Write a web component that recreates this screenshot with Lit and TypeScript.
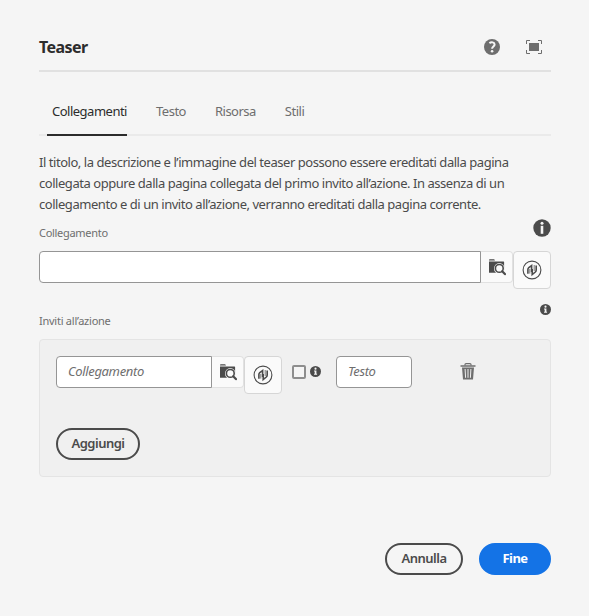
import { LitElement, html, css } from "lit";
import { customElement } from "lit/decorators.js";

const infoIcon = (cls: string) => html`<svg class=${cls} viewBox="0 0 18 18">
  <circle cx="9" cy="9" r="9" fill="#4b4b4b" />
  <circle cx="9" cy="4.400" r="1.750" fill="#f5f5f5" />
  <path d="M6.600 7.200h3.900v5.600h1.100v1.600H6.600v-1.600h1.100V8.800H6.600z" fill="#f5f5f5" />
</svg>`;

const bigInfoIcon = html`<svg class="big" viewBox="0 0 18 18">
  <circle cx="9" cy="9" r="8.700" fill="#4b4b4b" />
  <circle cx="9" cy="4.300" r="1.500" fill="#f5f5f5" />
  <path d="M7.700 6.800h2.600v8H7.700z" fill="#f5f5f5" />
</svg>`;

const folderIcon = html`<svg class="folder" viewBox="0 0 18 18">
  <path d="M1 2.500c0-.8.400-1.300 1-1.300h3.600c.6 0 1 .3 1.400 1.300z" fill="#4b4b4b" />
  <path d="M1 3.400h14.500c.400 0 .6.200.6.600V14.700H1z" fill="#4b4b4b" />
  <circle cx="11.300" cy="10.400" r="5.300" fill="#fafafa" />
  <path d="M11 10.500l7 2v4h-7z" fill="#fafafa" />
  <circle cx="11.300" cy="10.400" r="3.900" fill="#fafafa" stroke="#4b4b4b" stroke-width="1.600" />
  <path d="M14.200 13.300l2.700 2.800" stroke="#4b4b4b" stroke-width="2.200" stroke-linecap="round" />
</svg>`;

const linkIcon = html`<svg class="link" viewBox="0 0 20 20">
  <circle cx="10" cy="10" r="8.900" fill="none" stroke="#4b4b4b" stroke-width="1.100" />
  <path d="M5.900 13.800V9.600Q5.900 8.500 6.800 7.700L9.600 5.600V12" fill="none" stroke="#4b4b4b" stroke-width="1.600" />
  <path d="M7.800 9v4.600" stroke="#777" stroke-width="1" />
  <path d="M14.200 5.600v4.400Q14.200 11.200 13.300 12L10.200 14.600V9" fill="none" stroke="#4b4b4b" stroke-width="1.600" />
  <path d="M12.200 5v6" stroke="#777" stroke-width="1" />
</svg>`;

@customElement("app-root")
export class AppRoot extends LitElement {
  static styles = css`
    :host {
      display: block;
      box-sizing: border-box;
      height: 616px;
      padding: 24px 38px 0 39px;
      background: #f5f5f5;
      color: #4b4b4b;
      font: 13px/21px "Noto Sans", sans-serif;
      white-space: nowrap;
    }
    * { box-sizing: border-box; }
    svg { display: block; flex: none; }
    header {
      display: flex;
      align-items: center;
      height: 48px;
      border-bottom: 2px solid #e1e1e1;
    }
    h1 {
      flex: 1;
      margin: 0;
      font-size: 16px;
      font-weight: 700;
      letter-spacing: -0.55px;
      color: #2c2c2c;
    }
    .help { width: 16px; height: 16px; margin-right: 26px; }
    .full { width: 16px; height: 14px; margin-right: 9px; }
    nav {
      display: flex;
      height: 64px;
      padding: 15px 8px 0;
      border-bottom: 2px solid #eaeaea;
      color: #6e6e6e;
    }
    .tab {
      height: 49px;
      line-height: 48px;
      padding: 0 5px;
      margin-right: 19px;
      letter-spacing: -0.5px;
    }
    .tab.on {
      width: 80px;
      padding: 0 0 0 5px;
      margin-right: 24px;
      color: #2c2c2c;
      border-bottom: 2px solid #2c2c2c;
    }
    p { margin: 16px 0 0; letter-spacing: -0.455px; }
    .label {
      display: flex;
      justify-content: space-between;
      font-size: 11px;
      letter-spacing: -0.3px;
      color: #6e6e6e;
    }
    .first { height: 36px; padding-top: 7px; }
    .second { height: 50px; padding-top: 14px; }
    .second span { padding-top: 7px; letter-spacing: -0.25px; }
    .big { width: 18px; height: 18px; margin-top: -3px; }
    .small { width: 11px; height: 11px; margin-top: 1px; }
    .row { display: flex; align-items: flex-start; }
    .field {
      height: 32px;
      border: 1px solid #959595;
      background: #fff;
      padding-left: 11px;
      line-height: 29px;
      font-style: italic;
      letter-spacing: -0.35px;
      color: #6e6e6e;
    }
    .main { width: 442px; border-radius: 4px 0 0 4px; }
    .cta { width: 156px; border-radius: 4px 0 0 4px; }
    .text { width: 76px; border-radius: 4px; margin-left: 15px; }
    .btn {
      display: flex;
      justify-content: center;
      align-items: center;
      border: 1px solid #e1e1e1;
      background: #fafafa;
      border-radius: 4px;
    }
    .pick { width: 32px; height: 32px; border-left: 0; border-radius: 0 4px 4px 0; }
    .conn { width: 38px; height: 38px; border-color: #d6d6d6; }
    .folder { width: 18px; height: 18px; }
    .link { width: 20px; height: 20px; }
    .panel {
      height: 138px;
      padding: 16px;
      border: 1px solid #e4e4e4;
      border-radius: 4px;
      background: #f0f0f0;
    }
    .check {
      width: 14px;
      height: 14px;
      margin: 9px 4px 0 10px;
      border: 2px solid #8e8e8e;
      border-radius: 2px;
      background: #f5f5f5;
    }
    .tiny { width: 11px; height: 11px; margin-top: 10px; }
    .trash { width: 16px; height: 17px; margin: 7px 0 0 48px; }
    .pill {
      height: 32px;
      border: 2px solid #4b4b4b;
      border-radius: 16px;
      line-height: 27px;
      text-align: center;
      font-weight: 600;
      letter-spacing: -0.5px;
    }
    .add { width: 84px; margin-top: 34px; }
    footer { display: flex; justify-content: flex-end; gap: 16px; margin-top: 66px; }
    .cancel { width: 78px; }
    .done { width: 72px; background: #1473e6; border-color: #1473e6; color: #fff; font-weight: 700; }
  `;

  render() {
    return html`
      <header>
        <h1>Teaser</h1>
        <svg class="help" viewBox="0 0 16 16">
          <circle cx="8" cy="8" r="8" fill="#6e6e6e" />
          <path d="M5.400 4.100C7.400 2.600 10.600 3.200 10.600 5.500C10.600 7.400 8.100 7.700 8.100 9.700" fill="none" stroke="#f5f5f5" stroke-width="2" />
          <circle cx="8.100" cy="12.200" r="1.300" fill="#f5f5f5" />
        </svg>
        <svg class="full" viewBox="0 0 16 14">
          <path d="M.5 4V.5H4M12 .5h3.500V4M15.500 10v3.500H12M4 13.500H.5V10" fill="none" stroke="#6e6e6e" />
          <rect x="3" y="3" width="10" height="8" fill="#6e6e6e" />
        </svg>
      </header>
      <nav>
        <div class="tab on">Collegamenti</div>
        <div class="tab">Testo</div>
        <div class="tab">Risorsa</div>
        <div class="tab">Stili</div>
      </nav>
      <p>
        Il titolo, la descrizione e l’immagine del teaser possono essere ereditati dalla pagina<br />
        collegata oppure dalla pagina collegata del primo invito all’azione. In assenza di un<br />
        collegamento e di un invito all’azione, verranno ereditati dalla pagina corrente.
      </p>
      <div class="label first"><span>Collegamento</span>${bigInfoIcon}</div>
      <div class="row">
        <div class="field main"></div>
        <div class="btn pick">${folderIcon}</div>
        <div class="btn conn">${linkIcon}</div>
      </div>
      <div class="label second"><span>Inviti all’azione</span>${infoIcon("small")}</div>
      <div class="panel">
        <div class="row">
          <div class="field cta">Collegamento</div>
          <div class="btn pick">${folderIcon}</div>
          <div class="btn conn">${linkIcon}</div>
          <div class="check"></div>
          ${infoIcon("tiny")}
          <div class="field text">Testo</div>
          <svg class="trash" viewBox="0 0 16 17">
            <path d="M5 2.500V1.500Q5 .6 6 .6h4q1 0 1 .9v1" fill="none" stroke="#6e6e6e" stroke-width="1.200" />
            <path d="M.5 2.300h15v1.400H.5zM2 4.500h12l-1 12H3z" fill="#6e6e6e" />
            <path d="M5.100 6l.5 8.800M8 6v8.800M10.900 6l-.5 8.800" stroke="#f0f0f0" stroke-width="1" />
          </svg>
        </div>
        <div class="pill add">Aggiungi</div>
      </div>
      <footer>
        <div class="pill cancel">Annulla</div>
        <div class="pill done">Fine</div>
      </footer>
    `;
  }
}
